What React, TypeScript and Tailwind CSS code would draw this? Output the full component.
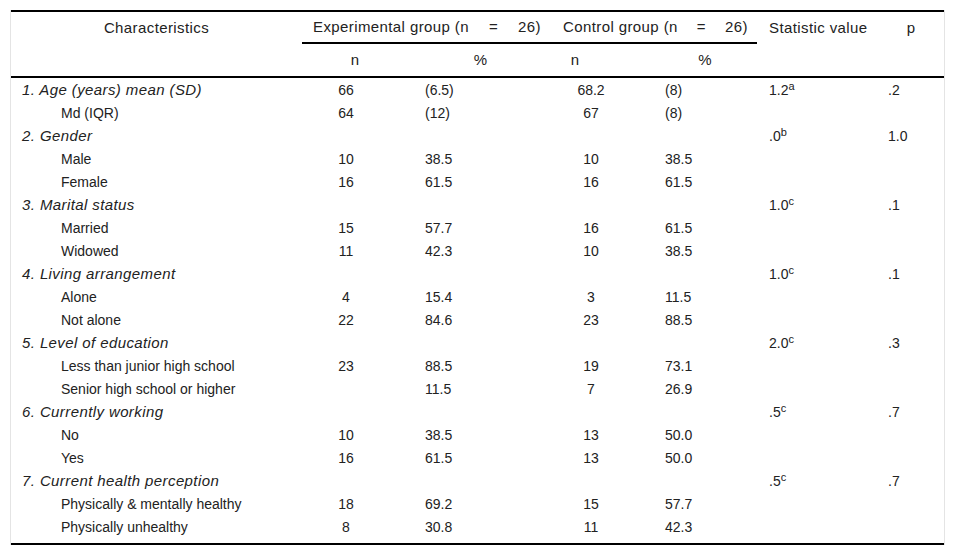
type Row = {
  label: string;
  head?: boolean;
  en?: string;
  ep?: string;
  cn?: string;
  cp?: string;
  stat?: string;
  sup?: string;
  p?: string;
};

const rows: Row[] = [
  { label: "1. Age (years) mean (SD)", head: true, en: "66", ep: "(6.5)", cn: "68.2", cp: "(8)", stat: "1.2", sup: "a", p: ".2" },
  { label: "Md (IQR)", en: "64", ep: "(12)", cn: "67", cp: "(8)" },
  { label: "2. Gender", head: true, stat: ".0", sup: "b", p: "1.0" },
  { label: "Male", en: "10", ep: "38.5", cn: "10", cp: "38.5" },
  { label: "Female", en: "16", ep: "61.5", cn: "16", cp: "61.5" },
  { label: "3. Marital status", head: true, stat: "1.0", sup: "c", p: ".1" },
  { label: "Married", en: "15", ep: "57.7", cn: "16", cp: "61.5" },
  { label: "Widowed", en: "11", ep: "42.3", cn: "10", cp: "38.5" },
  { label: "4. Living arrangement", head: true, stat: "1.0", sup: "c", p: ".1" },
  { label: "Alone", en: "4", ep: "15.4", cn: "3", cp: "11.5" },
  { label: "Not alone", en: "22", ep: "84.6", cn: "23", cp: "88.5" },
  { label: "5. Level of education", head: true, stat: "2.0", sup: "c", p: ".3" },
  { label: "Less than junior high school", en: "23", ep: "88.5", cn: "19", cp: "73.1" },
  { label: "Senior high school or higher", en: "", ep: "11.5", cn: "7", cp: "26.9" },
  { label: "6. Currently working", head: true, stat: ".5", sup: "c", p: ".7" },
  { label: "No", en: "10", ep: "38.5", cn: "13", cp: "50.0" },
  { label: "Yes", en: "16", ep: "61.5", cn: "13", cp: "50.0" },
  { label: "7. Current health perception", head: true, stat: ".5", sup: "c", p: ".7" },
  { label: "Physically & mentally healthy", en: "18", ep: "69.2", cn: "15", cp: "57.7" },
  { label: "Physically unhealthy", en: "8", ep: "30.8", cn: "11", cp: "42.3" },
];

const cols = "grid grid-cols-[291px_88px_165px_72px_130px_123px_64px]";

export default function App() {
  return (
    <div
      className="bg-white text-[14px] text-[#222]"
      style={{ fontFamily: '"Liberation Sans", Arial, sans-serif' }}
    >
      <div className="ml-[10px] mt-[10px] w-[935px] border-x border-[#e4e4e4]">
        <div className="border-t-2 border-black">
          {/* header row 1 */}
          <div className={`${cols} h-[32px] items-center text-[15px] tracking-[0.4px]`}>
            <div className="text-center">Characteristics</div>
            <div className="col-span-2 flex h-full items-center justify-between border-b-2 border-black pl-[11px] pr-[14px]">
              <span>Experimental group (n</span>
              <span>=</span>
              <span>26)</span>
            </div>
            <div className="col-span-2 flex h-full items-center justify-between border-b-2 border-black pl-[8px] pr-[9px]">
              <span>Control group (n</span>
              <span>=</span>
              <span>26)</span>
            </div>
            <div className="pl-[12px]">Statistic value</div>
            <div className="pr-[2px] text-center">p</div>
          </div>
          {/* header row 2 */}
          <div className={`${cols} h-[34px] items-center border-b-2 border-black text-[15px]`}>
            <div />
            <div className="pl-[18px] text-center">n</div>
            <div className="pl-[16px] text-center">%</div>
            <div className="pr-[32px] text-center">n</div>
            <div className="pl-[26px] text-center">%</div>
            <div />
            <div />
          </div>
          {/* body */}
          <div className="pt-[1px] pb-[4px]">
            {rows.map((r) => (
              <div key={r.label} className={`${cols} h-[23px] items-center`}>
                <div className={r.head ? "pl-[11px] text-[15px] italic tracking-[0.4px]" : "pl-[50px]"}>
                  {r.label}
                </div>
                <div className="text-center">{r.en}</div>
                <div className="pl-[35px]">{r.ep}</div>
                <div className="text-center">{r.cn}</div>
                <div className="pl-[38px]">{r.cp}</div>
                <div className="pl-[12px]">
                  {r.stat}
                  {r.sup && <sup className="text-[11px]">{r.sup}</sup>}
                </div>
                <div className="pl-[8px]">{r.p}</div>
              </div>
            ))}
          </div>
          <div className="border-t-2 border-black" />
        </div>
      </div>
    </div>
  );
}
